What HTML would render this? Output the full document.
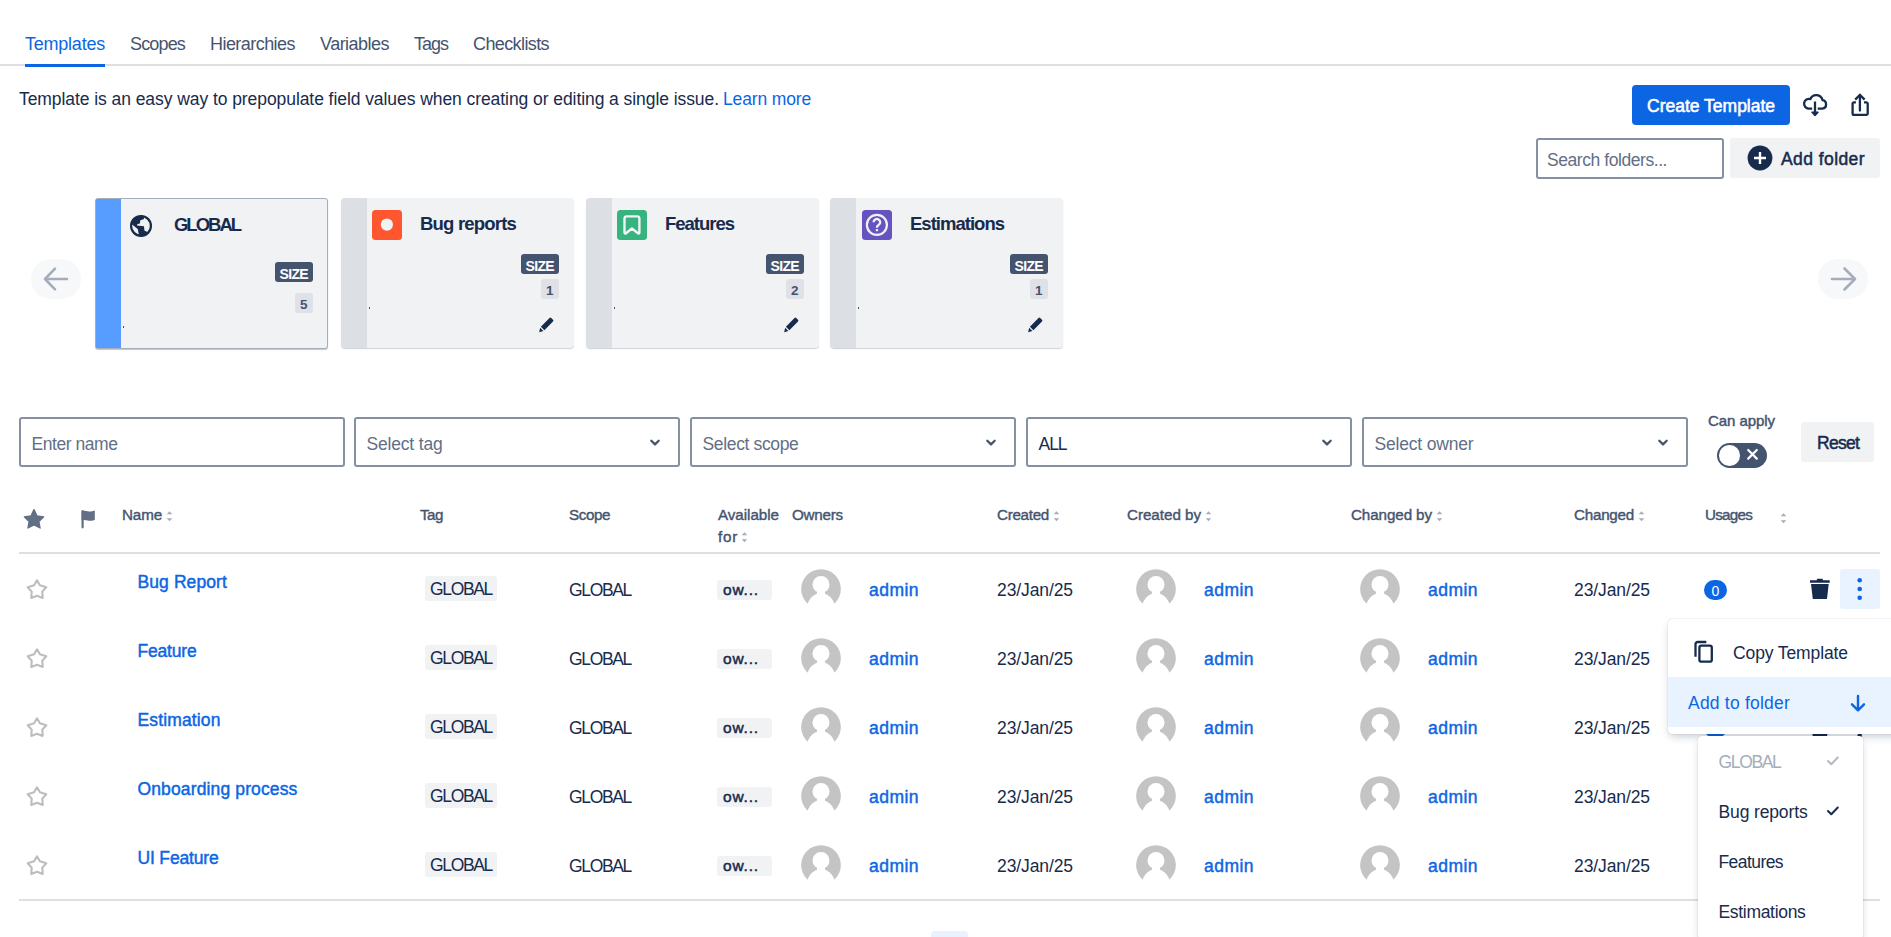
<!DOCTYPE html>
<html><head><meta charset="utf-8"><style>
html,body{margin:0;padding:0;background:#fff;width:1891px;height:937px;overflow:hidden;position:relative}
body>div,body>svg{position:absolute}
.t{white-space:nowrap;font-family:"Liberation Sans",sans-serif}
</style></head><body>
<div class="t" style="left:25px;top:33.96px;font-size:18px;line-height:21.60px;color:#0C66E4;letter-spacing:-0.229px;">Templates</div>
<div class="t" style="left:130px;top:33.96px;font-size:18px;line-height:21.60px;color:#44546F;letter-spacing:-0.841px;">Scopes</div>
<div class="t" style="left:210px;top:33.96px;font-size:18px;line-height:21.60px;color:#44546F;letter-spacing:-0.551px;">Hierarchies</div>
<div class="t" style="left:320px;top:33.96px;font-size:18px;line-height:21.60px;color:#44546F;letter-spacing:-0.526px;">Variables</div>
<div class="t" style="left:414px;top:33.96px;font-size:18px;line-height:21.60px;color:#44546F;letter-spacing:-1.008px;">Tags</div>
<div class="t" style="left:473px;top:33.96px;font-size:18px;line-height:21.60px;color:#44546F;letter-spacing:-0.603px;">Checklists</div>
<div style="left:0px;top:64px;width:1891px;height:2px;background:#DCDFE4"></div>
<div style="left:25px;top:64px;width:80px;height:2.5px;background:#0C66E4"></div>
<div class="t" style="left:19px;top:89.44px;font-size:17.5px;line-height:21.00px;color:#172B4D;letter-spacing:-0.068px;">Template is an easy way to prepopulate field values when creating or editing a single issue.</div>
<div class="t" style="left:723px;top:89.44px;font-size:17.5px;line-height:21.00px;color:#0C66E4;letter-spacing:-0.150px;">Learn more</div>
<div style="left:1632px;top:85px;width:158px;height:40px;background:#0C66E4;border-radius:4px"></div>
<div class="t" style="left:1647px;top:95.94px;font-size:17.5px;line-height:21.00px;color:#FFFFFF;-webkit-text-stroke:0.55px #FFFFFF;">Create Template</div>
<svg style="left:1795px;top:85px" width="40" height="35" viewBox="1795 85 40 35"><path d="M1812.2 108.6 H1808.7 A4.9 4.9 0 1 1 1810.46 99.03 A6.3 6.3 0 0 1 1822.46 100.10 A4.3 4.3 0 0 1 1822.4 108.6 H1817.7" fill="none" stroke="#172B4D" stroke-width="2.3" stroke-linejoin="round"/><path d="M1815 101.5 V114" stroke="#172B4D" stroke-width="2.3"/><path d="M1812 112.2 L1815 115.5 L1818 112.2Z" fill="#172B4D" stroke="#172B4D" stroke-width="1.5" stroke-linejoin="round"/></svg>
<svg style="left:1845px;top:85px" width="35" height="35" viewBox="1845 85 35 35"><path d="M1855.9 102.4 H1854 A1.4 1.4 0 0 0 1852.6 103.8 V113.4 A1.4 1.4 0 0 0 1854 114.8 H1866.3 A1.4 1.4 0 0 0 1867.7 113.4 V103.8 A1.4 1.4 0 0 0 1866.3 102.4 H1864" fill="none" stroke="#172B4D" stroke-width="2.3" stroke-linejoin="round"/><path d="M1859.9 110.6 V95.5" stroke="#172B4D" stroke-width="2.3" stroke-linecap="round"/><path d="M1856 98.8 L1859.9 94.9 L1863.8 98.8" fill="none" stroke="#172B4D" stroke-width="2.3" stroke-linecap="square"/></svg>
<div style="left:1536px;top:138px;width:187.5px;height:40.5px;border:2px solid #8590A2;border-radius:3px;box-sizing:border-box;background:#fff"></div>
<div class="t" style="left:1547px;top:149.94px;font-size:17.5px;line-height:21.00px;color:#626F86;letter-spacing:-0.437px;">Search folders...</div>
<div style="left:1730px;top:138px;width:150px;height:40px;background:#F1F2F4;border-radius:3px"></div>
<svg style="left:1745px;top:143px" width="30" height="30" viewBox="1745 143 30 30"><circle cx="1760" cy="158" r="12.4" fill="#172B4D"/><path d="M1760 152 V164 M1754 158 H1766" stroke="#fff" stroke-width="2.4"/></svg>
<div class="t" style="left:1781px;top:149.44px;font-size:17.5px;line-height:21.00px;color:#172B4D;-webkit-text-stroke:0.5px #172B4D;letter-spacing:0.422px;">Add folder</div>
<div style="left:31px;top:259px;width:50px;height:40px;background:#F7F8F9;border-radius:20px"></div>
<svg style="left:40px;top:260px" width="35" height="40" viewBox="40 260 35 40"><path d="M1067 279 H1047 M1055 268.7 L1045 279 L1055 289.3" transform="translate(-1000 0)" fill="none" stroke="#A5ADBA" stroke-width="2.6" stroke-linecap="round" stroke-linejoin="round"/></svg>
<div style="left:1818px;top:259px;width:50px;height:40px;background:#F7F8F9;border-radius:20px"></div>
<svg style="left:1825px;top:260px" width="35" height="40" viewBox="1825 260 35 40"><path d="M1832 279 H1852 M1844.5 268.5 L1855 279 L1844.5 289.5" fill="none" stroke="#A5ADBA" stroke-width="2.6" stroke-linecap="round" stroke-linejoin="round"/></svg>
<div style="left:95px;top:198px;width:233px;height:151px;background:#F1F2F4;border:1px solid #A5ADBA;border-radius:3px;box-sizing:border-box;box-shadow:0 1px 1px rgba(9,30,66,.25)"></div>
<div style="left:96px;top:199px;width:25px;height:149px;background:#579DFF"></div>
<div style="left:341px;top:198px;width:233px;height:150px;background:#F1F2F4;border-radius:4px;box-shadow:0 1px 1px rgba(9,30,66,.2)"></div>
<div style="left:341px;top:198px;width:26px;height:150px;background:#DCDFE4;border-radius:4px 0 0 4px"></div>
<div style="left:586px;top:198px;width:233px;height:150px;background:#F1F2F4;border-radius:4px;box-shadow:0 1px 1px rgba(9,30,66,.2)"></div>
<div style="left:586px;top:198px;width:26px;height:150px;background:#DCDFE4;border-radius:4px 0 0 4px"></div>
<div style="left:830px;top:198px;width:233px;height:150px;background:#F1F2F4;border-radius:4px;box-shadow:0 1px 1px rgba(9,30,66,.2)"></div>
<div style="left:830px;top:198px;width:26px;height:150px;background:#DCDFE4;border-radius:4px 0 0 4px"></div>
<svg style="left:128px;top:213px" width="26" height="26" viewBox="128 213 26 26"><defs><clipPath id="gc"><circle cx="141" cy="225.9" r="10.5"/></clipPath></defs><circle cx="141" cy="225.9" r="9.9" fill="none" stroke="#172B4D" stroke-width="2.2"/><g clip-path="url(#gc)"><g transform="translate(130 215)"><path d="M0 7.8 L7.7 13.9 L9.6 23 L23 23 L17.4 17 L14.4 15.4 L14 11.3 L7 10.6 L7 9.4 L10 8.3 L10.3 5.3 L13.7 4.2 L14.8 0 L0 0Z" fill="#172B4D"/></g></g></svg>
<div class="t" style="left:174px;top:214.19px;font-size:18.5px;line-height:22.20px;color:#172B4D;font-weight:700;letter-spacing:-2.016px;">GLOBAL</div>
<div style="left:275px;top:262px;width:38px;height:20px;background:#44546F;border-radius:3px"></div>
<div class="t" style="left:279.5px;top:265.75px;font-size:14px;line-height:16.80px;color:#fff;font-weight:700;letter-spacing:-0.656px;">SIZE</div>
<div style="left:295px;top:293px;width:18px;height:20px;background:#DFE1E6;border-radius:3px"></div>
<div class="t" style="left:300px;top:297.22px;font-size:13.5px;line-height:16.20px;color:#44546F;font-weight:700;">5</div>
<div style="left:123px;top:326px;width:1px;height:1.5px;background:#44546F"></div>
<svg style="left:372px;top:210px" width="30" height="30" viewBox="372 210 30 30"><rect x="372" y="210" width="30" height="30" rx="3.5" fill="#FF5630"/><circle cx="386.9" cy="224.6" r="6.1" fill="#F1F2F4"/></svg>
<div class="t" style="left:420px;top:213.49px;font-size:18.5px;line-height:22.20px;color:#172B4D;font-weight:700;letter-spacing:-0.801px;">Bug reports</div>
<svg style="left:617px;top:210px" width="30" height="30" viewBox="617 210 30 30"><rect x="617" y="210" width="30" height="30" rx="3.5" fill="#36B37E"/><path d="M624.5 232.5 V218.6 A2.2 2.2 0 0 1 626.7 216.4 H637.2 A2.2 2.2 0 0 1 639.4 218.6 V232.5 A0.9 0.9 0 0 1 638 233.3 L631.9 228.5 L626 233.3 A0.9 0.9 0 0 1 624.5 232.5Z" fill="none" stroke="#F1F2F4" stroke-width="2.4" stroke-linejoin="round"/></svg>
<div class="t" style="left:665px;top:213.49px;font-size:18.5px;line-height:22.20px;color:#172B4D;font-weight:700;letter-spacing:-1.010px;">Features</div>
<svg style="left:862px;top:210px" width="30" height="30" viewBox="862 210 30 30"><rect x="862" y="210" width="30" height="30" rx="3.5" fill="#6554C0"/><circle cx="876.9" cy="224.9" r="10" fill="none" stroke="#F1F2F4" stroke-width="2.2"/><path d="M873.6 222.3 A3.3 3.3 0 1 1 878.6 225.1 C877.2 225.9 876.9 226.4 876.9 227.8" fill="none" stroke="#F1F2F4" stroke-width="2.3"/><rect x="875.8" y="229.1" width="2.3" height="2.1" fill="#F1F2F4"/></svg>
<div class="t" style="left:910px;top:213.49px;font-size:18.5px;line-height:22.20px;color:#172B4D;font-weight:700;letter-spacing:-0.984px;">Estimations</div>
<div style="left:521px;top:254px;width:38px;height:20px;background:#44546F;border-radius:3px"></div>
<div class="t" style="left:525.5px;top:257.75px;font-size:14px;line-height:16.80px;color:#fff;font-weight:700;letter-spacing:-0.656px;">SIZE</div>
<div style="left:541px;top:279px;width:18px;height:20px;background:#DFE1E6;border-radius:3px"></div>
<div class="t" style="left:546px;top:283.22px;font-size:13.5px;line-height:16.20px;color:#44546F;font-weight:700;">1</div>
<svg style="left:536px;top:315px" width="20" height="20" viewBox="536 315 20 20"><g transform="translate(0 0)"><path d="M540.9 326.7 L549.5 318 A1.2 1.2 0 0 1 551.2 318 L553 319.8 A1.2 1.2 0 0 1 553 321.5 L544.4 330.2 Z" fill="#172B4D"/><path d="M540.1 327.7 L543.4 331 L539.2 332.2Z" fill="#172B4D"/></g></svg>
<div style="left:369px;top:307px;width:1px;height:1.5px;background:#44546F"></div>
<div style="left:766px;top:254px;width:38px;height:20px;background:#44546F;border-radius:3px"></div>
<div class="t" style="left:770.5px;top:257.75px;font-size:14px;line-height:16.80px;color:#fff;font-weight:700;letter-spacing:-0.656px;">SIZE</div>
<div style="left:786px;top:279px;width:18px;height:20px;background:#DFE1E6;border-radius:3px"></div>
<div class="t" style="left:791px;top:283.22px;font-size:13.5px;line-height:16.20px;color:#44546F;font-weight:700;">2</div>
<svg style="left:781px;top:315px" width="20" height="20" viewBox="781 315 20 20"><g transform="translate(245 0)"><path d="M540.9 326.7 L549.5 318 A1.2 1.2 0 0 1 551.2 318 L553 319.8 A1.2 1.2 0 0 1 553 321.5 L544.4 330.2 Z" fill="#172B4D"/><path d="M540.1 327.7 L543.4 331 L539.2 332.2Z" fill="#172B4D"/></g></svg>
<div style="left:614px;top:307px;width:1px;height:1.5px;background:#44546F"></div>
<div style="left:1010px;top:254px;width:38px;height:20px;background:#44546F;border-radius:3px"></div>
<div class="t" style="left:1014.5px;top:257.75px;font-size:14px;line-height:16.80px;color:#fff;font-weight:700;letter-spacing:-0.656px;">SIZE</div>
<div style="left:1030px;top:279px;width:18px;height:20px;background:#DFE1E6;border-radius:3px"></div>
<div class="t" style="left:1035px;top:283.22px;font-size:13.5px;line-height:16.20px;color:#44546F;font-weight:700;">1</div>
<svg style="left:1025px;top:315px" width="20" height="20" viewBox="1025 315 20 20"><g transform="translate(489 0)"><path d="M540.9 326.7 L549.5 318 A1.2 1.2 0 0 1 551.2 318 L553 319.8 A1.2 1.2 0 0 1 553 321.5 L544.4 330.2 Z" fill="#172B4D"/><path d="M540.1 327.7 L543.4 331 L539.2 332.2Z" fill="#172B4D"/></g></svg>
<div style="left:858px;top:307px;width:1px;height:1.5px;background:#44546F"></div>
<div style="left:19px;top:417px;width:326px;height:50px;border:2px solid #8590A2;border-radius:3px;box-sizing:border-box;background:#fff"></div>
<div class="t" style="left:31.5px;top:434.44px;font-size:17.5px;line-height:21.00px;color:#626F86;letter-spacing:-0.447px;">Enter name</div>
<div style="left:354px;top:417px;width:326px;height:50px;border:2px solid #8590A2;border-radius:3px;box-sizing:border-box;background:#fff"></div>
<div class="t" style="left:366.5px;top:434.44px;font-size:17.5px;line-height:21.00px;color:#626F86;letter-spacing:-0.183px;">Select tag</div>
<svg style="left:646px;top:432px" width="20" height="20" viewBox="646 432 20 20"><path d="M651.3 440.8 L655 444.4 L658.7 440.8" fill="none" stroke="#44546F" stroke-width="2.3" stroke-linecap="round" stroke-linejoin="round"/></svg>
<div style="left:690px;top:417px;width:326px;height:50px;border:2px solid #8590A2;border-radius:3px;box-sizing:border-box;background:#fff"></div>
<div class="t" style="left:702.5px;top:434.44px;font-size:17.5px;line-height:21.00px;color:#626F86;letter-spacing:-0.350px;">Select scope</div>
<svg style="left:982px;top:432px" width="20" height="20" viewBox="982 432 20 20"><path d="M987.3 440.8 L991 444.4 L994.7 440.8" fill="none" stroke="#44546F" stroke-width="2.3" stroke-linecap="round" stroke-linejoin="round"/></svg>
<div style="left:1026px;top:417px;width:326px;height:50px;border:2px solid #8590A2;border-radius:3px;box-sizing:border-box;background:#fff"></div>
<div class="t" style="left:1038.5px;top:434.44px;font-size:17.5px;line-height:21.00px;color:#172B4D;letter-spacing:-1.047px;">ALL</div>
<svg style="left:1318px;top:432px" width="20" height="20" viewBox="1318 432 20 20"><path d="M1323.3 440.8 L1327 444.4 L1330.7 440.8" fill="none" stroke="#44546F" stroke-width="2.3" stroke-linecap="round" stroke-linejoin="round"/></svg>
<div style="left:1362px;top:417px;width:326px;height:50px;border:2px solid #8590A2;border-radius:3px;box-sizing:border-box;background:#fff"></div>
<div class="t" style="left:1374.5px;top:434.44px;font-size:17.5px;line-height:21.00px;color:#626F86;letter-spacing:-0.181px;">Select owner</div>
<svg style="left:1654px;top:432px" width="20" height="20" viewBox="1654 432 20 20"><path d="M1659.3 440.8 L1663 444.4 L1666.7 440.8" fill="none" stroke="#44546F" stroke-width="2.3" stroke-linecap="round" stroke-linejoin="round"/></svg>
<div class="t" style="left:1708px;top:412.30px;font-size:15px;line-height:18.00px;color:#44546F;-webkit-text-stroke:0.45px #44546F;letter-spacing:-0.061px;">Can apply</div>
<div style="left:1717px;top:443px;width:50px;height:24.5px;background:#44546F;border-radius:12.5px"></div>
<div style="left:1719px;top:445px;width:20.5px;height:20.5px;background:#fff;border-radius:50%"></div>
<svg style="left:1745px;top:447px" width="15" height="15" viewBox="1745 447 15 15"><path d="M1748.2 450 L1756.8 458.6 M1756.8 450 L1748.2 458.6" stroke="#fff" stroke-width="2.2" stroke-linecap="round"/></svg>
<div style="left:1801px;top:422px;width:73px;height:40px;background:#F1F2F4;border-radius:3px"></div>
<div class="t" style="left:1817px;top:432.94px;font-size:17.5px;line-height:21.00px;color:#172B4D;-webkit-text-stroke:0.5px #172B4D;letter-spacing:-0.744px;">Reset</div>
<svg style="left:20px;top:505px" width="30" height="28" viewBox="20 505 30 28"><path d="M34 509.6 L37.1 516 L43.7 516.9 L38.9 521.6 L40.1 528 L34 524.9 L27.9 528 L29.1 521.6 L24.3 516.9 L30.9 516 Z" fill="#626F86" stroke="#626F86" stroke-width="1.3" stroke-linejoin="round"/></svg>
<svg style="left:78px;top:506px" width="20" height="25" viewBox="78 506 20 25"><path d="M82.6 527.3 V511" stroke="#626F86" stroke-width="2.2" stroke-linecap="round"/><path d="M81.6 511.2 C85 509.8 88 511.6 91 511.5 C92.5 511.4 93.5 511 94.8 510.6 V519.8 C93.5 520.4 92.5 520.8 91 520.8 C88 520.9 85 519.2 81.6 520.4Z" fill="#626F86"/></svg>
<div class="t" style="left:122px;top:506.11px;font-size:15.2px;line-height:18.24px;color:#44546F;-webkit-text-stroke:0.4px #44546F;letter-spacing:-0.133px;">Name</div>
<svg style="left:166px;top:510.7px" width="8" height="12" viewBox="166 510.7 8 12"><path d="M166.7 513.9 L169.5 511.0 L172.3 513.9Z M166.7 518.0 L169.5 520.9 L172.3 518.0Z" fill="#A5ADBA"/></svg>
<div class="t" style="left:420px;top:506.11px;font-size:15.2px;line-height:18.24px;color:#44546F;-webkit-text-stroke:0.4px #44546F;letter-spacing:-0.500px;">Tag</div>
<div class="t" style="left:569px;top:506.11px;font-size:15.2px;line-height:18.24px;color:#44546F;-webkit-text-stroke:0.4px #44546F;letter-spacing:-0.416px;">Scope</div>
<div class="t" style="left:718px;top:506.11px;font-size:15.2px;line-height:18.24px;color:#44546F;-webkit-text-stroke:0.4px #44546F;letter-spacing:-0.042px;">Available</div>
<div class="t" style="left:792px;top:506.11px;font-size:15.2px;line-height:18.24px;color:#44546F;-webkit-text-stroke:0.4px #44546F;letter-spacing:-0.224px;">Owners</div>
<div class="t" style="left:997px;top:506.11px;font-size:15.2px;line-height:18.24px;color:#44546F;-webkit-text-stroke:0.4px #44546F;letter-spacing:-0.295px;">Created</div>
<svg style="left:1053px;top:510.7px" width="8" height="12" viewBox="1053 510.7 8 12"><path d="M1053.7 513.9 L1056.5 511.0 L1059.3 513.9Z M1053.7 518.0 L1056.5 520.9 L1059.3 518.0Z" fill="#A5ADBA"/></svg>
<div class="t" style="left:1127px;top:506.11px;font-size:15.2px;line-height:18.24px;color:#44546F;-webkit-text-stroke:0.4px #44546F;letter-spacing:-0.033px;">Created by</div>
<svg style="left:1205px;top:510.7px" width="8" height="12" viewBox="1205 510.7 8 12"><path d="M1205.7 513.9 L1208.5 511.0 L1211.3 513.9Z M1205.7 518.0 L1208.5 520.9 L1211.3 518.0Z" fill="#A5ADBA"/></svg>
<div class="t" style="left:1351px;top:506.11px;font-size:15.2px;line-height:18.24px;color:#44546F;-webkit-text-stroke:0.4px #44546F;letter-spacing:-0.095px;">Changed by</div>
<svg style="left:1436px;top:510.7px" width="8" height="12" viewBox="1436 510.7 8 12"><path d="M1436.7 513.9 L1439.5 511.0 L1442.3 513.9Z M1436.7 518.0 L1439.5 520.9 L1442.3 518.0Z" fill="#A5ADBA"/></svg>
<div class="t" style="left:1574px;top:506.11px;font-size:15.2px;line-height:18.24px;color:#44546F;-webkit-text-stroke:0.4px #44546F;letter-spacing:-0.241px;">Changed</div>
<svg style="left:1638px;top:510.7px" width="8" height="12" viewBox="1638 510.7 8 12"><path d="M1638.7 513.9 L1641.5 511.0 L1644.3 513.9Z M1638.7 518.0 L1641.5 520.9 L1644.3 518.0Z" fill="#A5ADBA"/></svg>
<div class="t" style="left:1705px;top:506.11px;font-size:15.2px;line-height:18.24px;color:#44546F;-webkit-text-stroke:0.4px #44546F;letter-spacing:-0.753px;">Usages</div>
<div class="t" style="left:718px;top:527.61px;font-size:15.2px;line-height:18.24px;color:#44546F;-webkit-text-stroke:0.4px #44546F;letter-spacing:0.755px;">for</div>
<svg style="left:741px;top:531.5px" width="8" height="12" viewBox="741 531.5 8 12"><path d="M741.7 534.7 L744.5 531.8 L747.3 534.7Z M741.7 538.8 L744.5 541.7 L747.3 538.8Z" fill="#A5ADBA"/></svg>
<svg style="left:1780px;top:513px" width="8" height="12" viewBox="1780 513 8 12"><path d="M1780.7 516.2 L1783.5 513.3 L1786.3 516.2Z M1780.7 520.3 L1783.5 523.2 L1786.3 520.3Z" fill="#A5ADBA"/></svg>
<div style="left:19px;top:552px;width:1861px;height:2px;background:#DCDFE4"></div>
<svg style="left:22px;top:574px" width="30" height="30" viewBox="22 574 30 30"><g transform="translate(0 0)"><path d="M37 580.3 L39.9 585.3 L46.3 587.3 L42.3 591.6 L42.7 597.9 L37 595.8 L31.3 597.9 L31.7 591.6 L27.7 587.3 L34.1 585.3 Z" fill="none" stroke="#BDBDBD" stroke-width="2.1" stroke-linejoin="round"/></g></svg>
<div class="t" style="left:137.5px;top:572.44px;font-size:17.5px;line-height:21.00px;color:#0C66E4;-webkit-text-stroke:0.45px #0C66E4;letter-spacing:0.097px;">Bug Report</div>
<div style="left:425px;top:576px;width:72px;height:25px;background:#F1F2F4;border-radius:3px"></div>
<div class="t" style="left:430px;top:578.94px;font-size:17.5px;line-height:21.00px;color:#172B4D;letter-spacing:-1.339px;">GLOBAL</div>
<div class="t" style="left:569px;top:579.94px;font-size:17.5px;line-height:21.00px;color:#172B4D;letter-spacing:-1.339px;">GLOBAL</div>
<div style="left:717px;top:580px;width:55px;height:20px;background:#F1F2F4;border-radius:3px"></div>
<div class="t" style="left:723px;top:580.83px;font-size:15.5px;line-height:18.60px;color:#172B4D;-webkit-text-stroke:0.5px #172B4D;letter-spacing:0.822px;">ow...</div>
<svg style="left:799px;top:567px" width="44" height="40" viewBox="799 567 44 40"><circle cx="821" cy="589" r="19.85" fill="#C4C4C4"/><circle cx="821" cy="584.6" r="8.5" fill="#FFFFFF"/><rect x="817" y="590" width="8" height="8" fill="#fff"/><ellipse cx="821" cy="612" rx="15" ry="19" fill="#FFFFFF"/></svg>
<div class="t" style="left:869px;top:579.94px;font-size:17.5px;line-height:21.00px;color:#0C66E4;-webkit-text-stroke:0.45px #0C66E4;letter-spacing:0.466px;">admin</div>
<svg style="left:1134px;top:567px" width="44" height="40" viewBox="1134 567 44 40"><circle cx="1156" cy="589" r="19.85" fill="#C4C4C4"/><circle cx="1156" cy="584.6" r="8.5" fill="#FFFFFF"/><rect x="1152" y="590" width="8" height="8" fill="#fff"/><ellipse cx="1156" cy="612" rx="15" ry="19" fill="#FFFFFF"/></svg>
<div class="t" style="left:1204px;top:579.94px;font-size:17.5px;line-height:21.00px;color:#0C66E4;-webkit-text-stroke:0.45px #0C66E4;letter-spacing:0.466px;">admin</div>
<svg style="left:1358px;top:567px" width="44" height="40" viewBox="1358 567 44 40"><circle cx="1380" cy="589" r="19.85" fill="#C4C4C4"/><circle cx="1380" cy="584.6" r="8.5" fill="#FFFFFF"/><rect x="1376" y="590" width="8" height="8" fill="#fff"/><ellipse cx="1380" cy="612" rx="15" ry="19" fill="#FFFFFF"/></svg>
<div class="t" style="left:1428px;top:579.94px;font-size:17.5px;line-height:21.00px;color:#0C66E4;-webkit-text-stroke:0.45px #0C66E4;letter-spacing:0.466px;">admin</div>
<div class="t" style="left:997px;top:579.94px;font-size:17.5px;line-height:21.00px;color:#172B4D;letter-spacing:-0.097px;">23/Jan/25</div>
<div class="t" style="left:1574px;top:579.94px;font-size:17.5px;line-height:21.00px;color:#172B4D;letter-spacing:-0.097px;">23/Jan/25</div>
<div style="left:1704px;top:580px;width:23px;height:20px;background:#0C66E4;border-radius:10px"></div>
<div class="t" style="left:1711.5px;top:582.75px;font-size:14px;line-height:16.80px;color:#fff;">0</div>
<svg style="left:1808px;top:576px" width="24" height="26" viewBox="1808 576 24 26"><g transform="translate(0 0)"><path d="M1810 580.2 H1829.7 V582.8 H1810Z M1816.5 580.5 L1817.2 578.8 H1822.5 L1823.2 580.5Z M1811 584 H1828.7 L1827 598.9 H1812.8Z" fill="#172B4D"/></g></svg>
<div style="left:1840px;top:569px;width:40px;height:40px;background:#E9F2FF;border-radius:3px"></div>
<svg style="left:1852px;top:574px" width="15" height="30" viewBox="1852 574 15 30"><g transform="translate(0 0)"><circle cx="1859.7" cy="580.2" r="2.3" fill="#0C66E4"/><circle cx="1859.7" cy="589" r="2.3" fill="#0C66E4"/><circle cx="1859.7" cy="597.8" r="2.3" fill="#0C66E4"/></g></svg>
<svg style="left:22px;top:643px" width="30" height="30" viewBox="22 643 30 30"><g transform="translate(0 69)"><path d="M37 580.3 L39.9 585.3 L46.3 587.3 L42.3 591.6 L42.7 597.9 L37 595.8 L31.3 597.9 L31.7 591.6 L27.7 587.3 L34.1 585.3 Z" fill="none" stroke="#BDBDBD" stroke-width="2.1" stroke-linejoin="round"/></g></svg>
<div class="t" style="left:137.5px;top:641.44px;font-size:17.5px;line-height:21.00px;color:#0C66E4;-webkit-text-stroke:0.45px #0C66E4;letter-spacing:-0.188px;">Feature</div>
<div style="left:425px;top:645px;width:72px;height:25px;background:#F1F2F4;border-radius:3px"></div>
<div class="t" style="left:430px;top:647.94px;font-size:17.5px;line-height:21.00px;color:#172B4D;letter-spacing:-1.339px;">GLOBAL</div>
<div class="t" style="left:569px;top:648.94px;font-size:17.5px;line-height:21.00px;color:#172B4D;letter-spacing:-1.339px;">GLOBAL</div>
<div style="left:717px;top:649px;width:55px;height:20px;background:#F1F2F4;border-radius:3px"></div>
<div class="t" style="left:723px;top:649.83px;font-size:15.5px;line-height:18.60px;color:#172B4D;-webkit-text-stroke:0.5px #172B4D;letter-spacing:0.822px;">ow...</div>
<svg style="left:799px;top:636px" width="44" height="40" viewBox="799 636 44 40"><circle cx="821" cy="658" r="19.85" fill="#C4C4C4"/><circle cx="821" cy="653.6" r="8.5" fill="#FFFFFF"/><rect x="817" y="659" width="8" height="8" fill="#fff"/><ellipse cx="821" cy="681" rx="15" ry="19" fill="#FFFFFF"/></svg>
<div class="t" style="left:869px;top:648.94px;font-size:17.5px;line-height:21.00px;color:#0C66E4;-webkit-text-stroke:0.45px #0C66E4;letter-spacing:0.466px;">admin</div>
<svg style="left:1134px;top:636px" width="44" height="40" viewBox="1134 636 44 40"><circle cx="1156" cy="658" r="19.85" fill="#C4C4C4"/><circle cx="1156" cy="653.6" r="8.5" fill="#FFFFFF"/><rect x="1152" y="659" width="8" height="8" fill="#fff"/><ellipse cx="1156" cy="681" rx="15" ry="19" fill="#FFFFFF"/></svg>
<div class="t" style="left:1204px;top:648.94px;font-size:17.5px;line-height:21.00px;color:#0C66E4;-webkit-text-stroke:0.45px #0C66E4;letter-spacing:0.466px;">admin</div>
<svg style="left:1358px;top:636px" width="44" height="40" viewBox="1358 636 44 40"><circle cx="1380" cy="658" r="19.85" fill="#C4C4C4"/><circle cx="1380" cy="653.6" r="8.5" fill="#FFFFFF"/><rect x="1376" y="659" width="8" height="8" fill="#fff"/><ellipse cx="1380" cy="681" rx="15" ry="19" fill="#FFFFFF"/></svg>
<div class="t" style="left:1428px;top:648.94px;font-size:17.5px;line-height:21.00px;color:#0C66E4;-webkit-text-stroke:0.45px #0C66E4;letter-spacing:0.466px;">admin</div>
<div class="t" style="left:997px;top:648.94px;font-size:17.5px;line-height:21.00px;color:#172B4D;letter-spacing:-0.097px;">23/Jan/25</div>
<div class="t" style="left:1574px;top:648.94px;font-size:17.5px;line-height:21.00px;color:#172B4D;letter-spacing:-0.097px;">23/Jan/25</div>
<div style="left:1704px;top:649px;width:23px;height:20px;background:#0C66E4;border-radius:10px"></div>
<div class="t" style="left:1711.5px;top:651.75px;font-size:14px;line-height:16.80px;color:#fff;">0</div>
<svg style="left:1808px;top:645px" width="24" height="26" viewBox="1808 645 24 26"><g transform="translate(0 69)"><path d="M1810 580.2 H1829.7 V582.8 H1810Z M1816.5 580.5 L1817.2 578.8 H1822.5 L1823.2 580.5Z M1811 584 H1828.7 L1827 598.9 H1812.8Z" fill="#172B4D"/></g></svg>
<svg style="left:1852px;top:643px" width="15" height="30" viewBox="1852 643 15 30"><g transform="translate(0 69)"><circle cx="1859.7" cy="580.2" r="2.3" fill="#172B4D"/><circle cx="1859.7" cy="589" r="2.3" fill="#172B4D"/><circle cx="1859.7" cy="597.8" r="2.3" fill="#172B4D"/></g></svg>
<svg style="left:22px;top:712px" width="30" height="30" viewBox="22 712 30 30"><g transform="translate(0 138)"><path d="M37 580.3 L39.9 585.3 L46.3 587.3 L42.3 591.6 L42.7 597.9 L37 595.8 L31.3 597.9 L31.7 591.6 L27.7 587.3 L34.1 585.3 Z" fill="none" stroke="#BDBDBD" stroke-width="2.1" stroke-linejoin="round"/></g></svg>
<div class="t" style="left:137.5px;top:710.44px;font-size:17.5px;line-height:21.00px;color:#0C66E4;-webkit-text-stroke:0.45px #0C66E4;letter-spacing:0.130px;">Estimation</div>
<div style="left:425px;top:714px;width:72px;height:25px;background:#F1F2F4;border-radius:3px"></div>
<div class="t" style="left:430px;top:716.94px;font-size:17.5px;line-height:21.00px;color:#172B4D;letter-spacing:-1.339px;">GLOBAL</div>
<div class="t" style="left:569px;top:717.94px;font-size:17.5px;line-height:21.00px;color:#172B4D;letter-spacing:-1.339px;">GLOBAL</div>
<div style="left:717px;top:718px;width:55px;height:20px;background:#F1F2F4;border-radius:3px"></div>
<div class="t" style="left:723px;top:718.83px;font-size:15.5px;line-height:18.60px;color:#172B4D;-webkit-text-stroke:0.5px #172B4D;letter-spacing:0.822px;">ow...</div>
<svg style="left:799px;top:705px" width="44" height="40" viewBox="799 705 44 40"><circle cx="821" cy="727" r="19.85" fill="#C4C4C4"/><circle cx="821" cy="722.6" r="8.5" fill="#FFFFFF"/><rect x="817" y="728" width="8" height="8" fill="#fff"/><ellipse cx="821" cy="750" rx="15" ry="19" fill="#FFFFFF"/></svg>
<div class="t" style="left:869px;top:717.94px;font-size:17.5px;line-height:21.00px;color:#0C66E4;-webkit-text-stroke:0.45px #0C66E4;letter-spacing:0.466px;">admin</div>
<svg style="left:1134px;top:705px" width="44" height="40" viewBox="1134 705 44 40"><circle cx="1156" cy="727" r="19.85" fill="#C4C4C4"/><circle cx="1156" cy="722.6" r="8.5" fill="#FFFFFF"/><rect x="1152" y="728" width="8" height="8" fill="#fff"/><ellipse cx="1156" cy="750" rx="15" ry="19" fill="#FFFFFF"/></svg>
<div class="t" style="left:1204px;top:717.94px;font-size:17.5px;line-height:21.00px;color:#0C66E4;-webkit-text-stroke:0.45px #0C66E4;letter-spacing:0.466px;">admin</div>
<svg style="left:1358px;top:705px" width="44" height="40" viewBox="1358 705 44 40"><circle cx="1380" cy="727" r="19.85" fill="#C4C4C4"/><circle cx="1380" cy="722.6" r="8.5" fill="#FFFFFF"/><rect x="1376" y="728" width="8" height="8" fill="#fff"/><ellipse cx="1380" cy="750" rx="15" ry="19" fill="#FFFFFF"/></svg>
<div class="t" style="left:1428px;top:717.94px;font-size:17.5px;line-height:21.00px;color:#0C66E4;-webkit-text-stroke:0.45px #0C66E4;letter-spacing:0.466px;">admin</div>
<div class="t" style="left:997px;top:717.94px;font-size:17.5px;line-height:21.00px;color:#172B4D;letter-spacing:-0.097px;">23/Jan/25</div>
<div class="t" style="left:1574px;top:717.94px;font-size:17.5px;line-height:21.00px;color:#172B4D;letter-spacing:-0.097px;">23/Jan/25</div>
<div style="left:1704px;top:718px;width:23px;height:20px;background:#0C66E4;border-radius:10px"></div>
<div class="t" style="left:1711.5px;top:720.75px;font-size:14px;line-height:16.80px;color:#fff;">0</div>
<svg style="left:1808px;top:714px" width="24" height="26" viewBox="1808 714 24 26"><g transform="translate(0 138)"><path d="M1810 580.2 H1829.7 V582.8 H1810Z M1816.5 580.5 L1817.2 578.8 H1822.5 L1823.2 580.5Z M1811 584 H1828.7 L1827 598.9 H1812.8Z" fill="#172B4D"/></g></svg>
<svg style="left:1852px;top:712px" width="15" height="30" viewBox="1852 712 15 30"><g transform="translate(0 138)"><circle cx="1859.7" cy="580.2" r="2.3" fill="#172B4D"/><circle cx="1859.7" cy="589" r="2.3" fill="#172B4D"/><circle cx="1859.7" cy="597.8" r="2.3" fill="#172B4D"/></g></svg>
<svg style="left:22px;top:781px" width="30" height="30" viewBox="22 781 30 30"><g transform="translate(0 207)"><path d="M37 580.3 L39.9 585.3 L46.3 587.3 L42.3 591.6 L42.7 597.9 L37 595.8 L31.3 597.9 L31.7 591.6 L27.7 587.3 L34.1 585.3 Z" fill="none" stroke="#BDBDBD" stroke-width="2.1" stroke-linejoin="round"/></g></svg>
<div class="t" style="left:137.5px;top:779.44px;font-size:17.5px;line-height:21.00px;color:#0C66E4;-webkit-text-stroke:0.45px #0C66E4;letter-spacing:0.133px;">Onboarding process</div>
<div style="left:425px;top:783px;width:72px;height:25px;background:#F1F2F4;border-radius:3px"></div>
<div class="t" style="left:430px;top:785.94px;font-size:17.5px;line-height:21.00px;color:#172B4D;letter-spacing:-1.339px;">GLOBAL</div>
<div class="t" style="left:569px;top:786.94px;font-size:17.5px;line-height:21.00px;color:#172B4D;letter-spacing:-1.339px;">GLOBAL</div>
<div style="left:717px;top:787px;width:55px;height:20px;background:#F1F2F4;border-radius:3px"></div>
<div class="t" style="left:723px;top:787.83px;font-size:15.5px;line-height:18.60px;color:#172B4D;-webkit-text-stroke:0.5px #172B4D;letter-spacing:0.822px;">ow...</div>
<svg style="left:799px;top:774px" width="44" height="40" viewBox="799 774 44 40"><circle cx="821" cy="796" r="19.85" fill="#C4C4C4"/><circle cx="821" cy="791.6" r="8.5" fill="#FFFFFF"/><rect x="817" y="797" width="8" height="8" fill="#fff"/><ellipse cx="821" cy="819" rx="15" ry="19" fill="#FFFFFF"/></svg>
<div class="t" style="left:869px;top:786.94px;font-size:17.5px;line-height:21.00px;color:#0C66E4;-webkit-text-stroke:0.45px #0C66E4;letter-spacing:0.466px;">admin</div>
<svg style="left:1134px;top:774px" width="44" height="40" viewBox="1134 774 44 40"><circle cx="1156" cy="796" r="19.85" fill="#C4C4C4"/><circle cx="1156" cy="791.6" r="8.5" fill="#FFFFFF"/><rect x="1152" y="797" width="8" height="8" fill="#fff"/><ellipse cx="1156" cy="819" rx="15" ry="19" fill="#FFFFFF"/></svg>
<div class="t" style="left:1204px;top:786.94px;font-size:17.5px;line-height:21.00px;color:#0C66E4;-webkit-text-stroke:0.45px #0C66E4;letter-spacing:0.466px;">admin</div>
<svg style="left:1358px;top:774px" width="44" height="40" viewBox="1358 774 44 40"><circle cx="1380" cy="796" r="19.85" fill="#C4C4C4"/><circle cx="1380" cy="791.6" r="8.5" fill="#FFFFFF"/><rect x="1376" y="797" width="8" height="8" fill="#fff"/><ellipse cx="1380" cy="819" rx="15" ry="19" fill="#FFFFFF"/></svg>
<div class="t" style="left:1428px;top:786.94px;font-size:17.5px;line-height:21.00px;color:#0C66E4;-webkit-text-stroke:0.45px #0C66E4;letter-spacing:0.466px;">admin</div>
<div class="t" style="left:997px;top:786.94px;font-size:17.5px;line-height:21.00px;color:#172B4D;letter-spacing:-0.097px;">23/Jan/25</div>
<div class="t" style="left:1574px;top:786.94px;font-size:17.5px;line-height:21.00px;color:#172B4D;letter-spacing:-0.097px;">23/Jan/25</div>
<div style="left:1704px;top:787px;width:23px;height:20px;background:#0C66E4;border-radius:10px"></div>
<div class="t" style="left:1711.5px;top:789.75px;font-size:14px;line-height:16.80px;color:#fff;">0</div>
<svg style="left:1808px;top:783px" width="24" height="26" viewBox="1808 783 24 26"><g transform="translate(0 207)"><path d="M1810 580.2 H1829.7 V582.8 H1810Z M1816.5 580.5 L1817.2 578.8 H1822.5 L1823.2 580.5Z M1811 584 H1828.7 L1827 598.9 H1812.8Z" fill="#172B4D"/></g></svg>
<svg style="left:1852px;top:781px" width="15" height="30" viewBox="1852 781 15 30"><g transform="translate(0 207)"><circle cx="1859.7" cy="580.2" r="2.3" fill="#172B4D"/><circle cx="1859.7" cy="589" r="2.3" fill="#172B4D"/><circle cx="1859.7" cy="597.8" r="2.3" fill="#172B4D"/></g></svg>
<svg style="left:22px;top:850px" width="30" height="30" viewBox="22 850 30 30"><g transform="translate(0 276)"><path d="M37 580.3 L39.9 585.3 L46.3 587.3 L42.3 591.6 L42.7 597.9 L37 595.8 L31.3 597.9 L31.7 591.6 L27.7 587.3 L34.1 585.3 Z" fill="none" stroke="#BDBDBD" stroke-width="2.1" stroke-linejoin="round"/></g></svg>
<div class="t" style="left:137.5px;top:848.44px;font-size:17.5px;line-height:21.00px;color:#0C66E4;-webkit-text-stroke:0.45px #0C66E4;letter-spacing:-0.167px;">UI Feature</div>
<div style="left:425px;top:852px;width:72px;height:25px;background:#F1F2F4;border-radius:3px"></div>
<div class="t" style="left:430px;top:854.94px;font-size:17.5px;line-height:21.00px;color:#172B4D;letter-spacing:-1.339px;">GLOBAL</div>
<div class="t" style="left:569px;top:855.94px;font-size:17.5px;line-height:21.00px;color:#172B4D;letter-spacing:-1.339px;">GLOBAL</div>
<div style="left:717px;top:856px;width:55px;height:20px;background:#F1F2F4;border-radius:3px"></div>
<div class="t" style="left:723px;top:856.83px;font-size:15.5px;line-height:18.60px;color:#172B4D;-webkit-text-stroke:0.5px #172B4D;letter-spacing:0.822px;">ow...</div>
<svg style="left:799px;top:843px" width="44" height="40" viewBox="799 843 44 40"><circle cx="821" cy="865" r="19.85" fill="#C4C4C4"/><circle cx="821" cy="860.6" r="8.5" fill="#FFFFFF"/><rect x="817" y="866" width="8" height="8" fill="#fff"/><ellipse cx="821" cy="888" rx="15" ry="19" fill="#FFFFFF"/></svg>
<div class="t" style="left:869px;top:855.94px;font-size:17.5px;line-height:21.00px;color:#0C66E4;-webkit-text-stroke:0.45px #0C66E4;letter-spacing:0.466px;">admin</div>
<svg style="left:1134px;top:843px" width="44" height="40" viewBox="1134 843 44 40"><circle cx="1156" cy="865" r="19.85" fill="#C4C4C4"/><circle cx="1156" cy="860.6" r="8.5" fill="#FFFFFF"/><rect x="1152" y="866" width="8" height="8" fill="#fff"/><ellipse cx="1156" cy="888" rx="15" ry="19" fill="#FFFFFF"/></svg>
<div class="t" style="left:1204px;top:855.94px;font-size:17.5px;line-height:21.00px;color:#0C66E4;-webkit-text-stroke:0.45px #0C66E4;letter-spacing:0.466px;">admin</div>
<svg style="left:1358px;top:843px" width="44" height="40" viewBox="1358 843 44 40"><circle cx="1380" cy="865" r="19.85" fill="#C4C4C4"/><circle cx="1380" cy="860.6" r="8.5" fill="#FFFFFF"/><rect x="1376" y="866" width="8" height="8" fill="#fff"/><ellipse cx="1380" cy="888" rx="15" ry="19" fill="#FFFFFF"/></svg>
<div class="t" style="left:1428px;top:855.94px;font-size:17.5px;line-height:21.00px;color:#0C66E4;-webkit-text-stroke:0.45px #0C66E4;letter-spacing:0.466px;">admin</div>
<div class="t" style="left:997px;top:855.94px;font-size:17.5px;line-height:21.00px;color:#172B4D;letter-spacing:-0.097px;">23/Jan/25</div>
<div class="t" style="left:1574px;top:855.94px;font-size:17.5px;line-height:21.00px;color:#172B4D;letter-spacing:-0.097px;">23/Jan/25</div>
<div style="left:1704px;top:856px;width:23px;height:20px;background:#0C66E4;border-radius:10px"></div>
<div class="t" style="left:1711.5px;top:858.75px;font-size:14px;line-height:16.80px;color:#fff;">0</div>
<svg style="left:1808px;top:852px" width="24" height="26" viewBox="1808 852 24 26"><g transform="translate(0 276)"><path d="M1810 580.2 H1829.7 V582.8 H1810Z M1816.5 580.5 L1817.2 578.8 H1822.5 L1823.2 580.5Z M1811 584 H1828.7 L1827 598.9 H1812.8Z" fill="#172B4D"/></g></svg>
<svg style="left:1852px;top:850px" width="15" height="30" viewBox="1852 850 15 30"><g transform="translate(0 276)"><circle cx="1859.7" cy="580.2" r="2.3" fill="#172B4D"/><circle cx="1859.7" cy="589" r="2.3" fill="#172B4D"/><circle cx="1859.7" cy="597.8" r="2.3" fill="#172B4D"/></g></svg>
<div style="left:19px;top:899px;width:1861px;height:2px;background:#DCDFE4"></div>
<div style="left:931px;top:931px;width:37px;height:20px;background:#E9F2FF;border-radius:4px"></div>
<div style="left:1668px;top:619px;width:240px;height:115px;background:#fff;border-radius:4px;box-shadow:0 4px 8px -2px rgba(9,30,66,.25),0 0 1px rgba(9,30,66,.31)"></div>
<svg style="left:1688px;top:636px" width="30" height="32" viewBox="1688 636 30 32"><path d="M1695.5 656.7 V644.2 A2.2 2.2 0 0 1 1697.7 642 H1706.3" fill="none" stroke="#172B4D" stroke-width="2.3" stroke-linecap="butt"/><rect x="1699.4" y="645.7" width="12.4" height="16" rx="2" fill="none" stroke="#172B4D" stroke-width="2.3"/></svg>
<div class="t" style="left:1733px;top:642.94px;font-size:17.5px;line-height:21.00px;color:#172B4D;letter-spacing:-0.109px;">Copy Template</div>
<div style="left:1668px;top:677px;width:223px;height:50px;background:#E9F2FF"></div>
<div class="t" style="left:1688px;top:692.94px;font-size:17.5px;line-height:21.00px;color:#0C66E4;letter-spacing:0.213px;">Add to folder</div>
<svg style="left:1845px;top:690px" width="26" height="26" viewBox="1845 690 26 26"><path d="M1858 696 V710 M1852 704.3 L1858 710.3 L1864 704.3" fill="none" stroke="#0C66E4" stroke-width="2.4" stroke-linecap="round" stroke-linejoin="round"/></svg>
<div style="left:1698px;top:736px;width:165px;height:203px;background:#fff;border-radius:4px;box-shadow:0 4px 8px -2px rgba(9,30,66,.25),0 0 1px rgba(9,30,66,.31)"></div>
<div class="t" style="left:1718.5px;top:751.94px;font-size:17.5px;line-height:21.00px;color:#A5ADBA;letter-spacing:-1.339px;">GLOBAL</div>
<svg style="left:1824px;top:753px" width="18" height="16" viewBox="1824 753 18 16"><path d="M1828 761 L1831.3 764.3 L1837.8 757.5" fill="none" stroke="#B3B9C4" stroke-width="2" stroke-linecap="round" stroke-linejoin="round"/></svg>
<div class="t" style="left:1718.5px;top:801.94px;font-size:17.5px;line-height:21.00px;color:#172B4D;letter-spacing:-0.134px;">Bug reports</div>
<svg style="left:1824px;top:803px" width="18" height="16" viewBox="1824 803 18 16"><path d="M1828 811 L1831.3 814.3 L1837.8 807.5" fill="none" stroke="#172B4D" stroke-width="2" stroke-linecap="round" stroke-linejoin="round"/></svg>
<div class="t" style="left:1718.5px;top:851.94px;font-size:17.5px;line-height:21.00px;color:#172B4D;letter-spacing:-0.570px;">Features</div>
<div class="t" style="left:1718.5px;top:901.94px;font-size:17.5px;line-height:21.00px;color:#172B4D;letter-spacing:-0.314px;">Estimations</div>
</body></html>
